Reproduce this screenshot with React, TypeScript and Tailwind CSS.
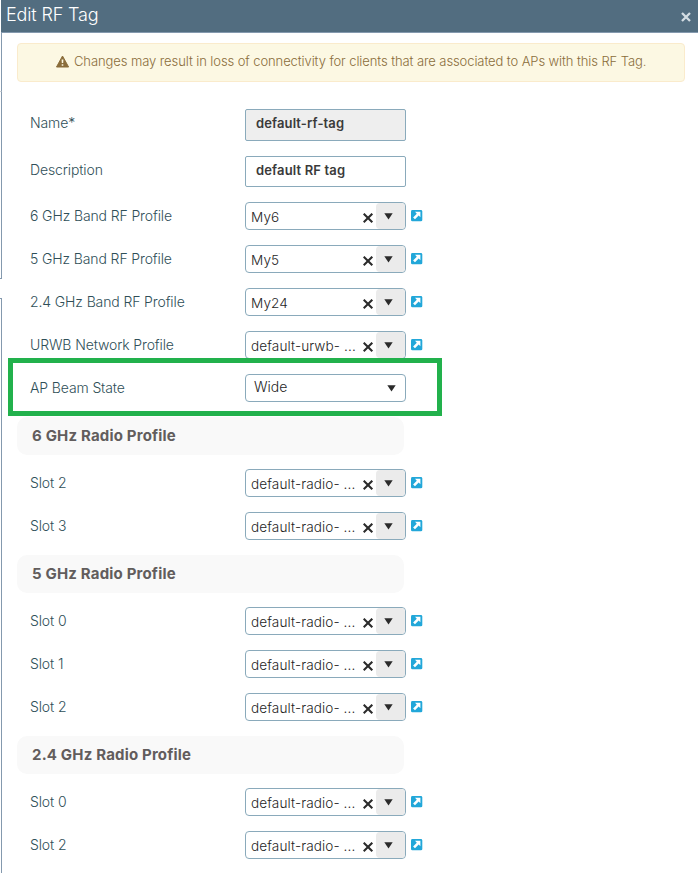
const font = "font-['Inter','Liberation_Sans',sans-serif]";

function WarningIcon() {
    return (
        <svg width="14" height="13" viewBox="0 0 14 13" className="-mt-[3px] mr-[4px] shrink-0">
            <path
                d="M6.5 1 L12.6 12 H0.5 Z"
                fill="#8a6d3b"
                stroke="#8a6d3b"
                strokeWidth="1"
                strokeLinejoin="round"
            />
            <path d="M5.6 4.4 H7.4 L7.2 8 H5.8 Z M5.7 9.2 H7.3 V10.8 H5.7 Z" fill="#fcf8e3" />
        </svg>
    );
}

function LinkIcon() {
    return (
        <svg width="12" height="12" viewBox="0 0 12 12" className="ml-[5px] -mt-px shrink-0">
            <rect x="0" y="0" width="11.3" height="11.3" rx="1.4" fill="#22a7d9" />
            <path d="M4 1.8 H9.4 V7.2 L7.7 5.6 L4 9.3 L2.1 7.4 L5.8 3.7 Z" fill="#fff" />
        </svg>
    );
}

function Arrow() {
    return (
        <svg width="9" height="7" viewBox="0 0 9 7" className="block">
            <path d="M0.3 0.2 H8.7 L4.5 6.6 Z" fill="#2b2b2b" />
        </svg>
    );
}

function Label({ text }: { text: string }) {
    return (
        <div className="w-[215px] shrink-0 text-[14px] leading-5 font-light tracking-[-0.12px] text-[#2f4f58] whitespace-nowrap">
            {text}
        </div>
    );
}

function ProfileRow({ label, value }: { label: string; value: string }) {
    return (
        <div className="flex h-7 items-center mb-[15px] pl-[28px]">
            <Label text={label} />
            <div className="flex h-7 w-[161px] items-center rounded-[4px] border border-[#8aaabb] bg-white">
                <span className="flex-1 pl-[5px] pt-[2px] text-[13.6px] leading-5 font-light tracking-[0.1px] text-[#1f1f1f] whitespace-nowrap">
                    {value}
                </span>
                <svg width="11" height="10" viewBox="0 0 11 10" className="mr-[2px] mt-[4px] shrink-0">
                    <path d="M0.7 0.7 L9.3 9.2 M9.3 0.7 L0.7 9.2" stroke="#2b2b2b" strokeWidth="2.1" />
                </svg>
                <div className="flex h-full w-[29px] shrink-0 justify-center rounded-[4px] bg-[#ebebeb] pt-[10px] pr-[4px]">
                    <Arrow />
                </div>
            </div>
            <LinkIcon />
        </div>
    );
}

function Section({ title }: { title: string }) {
    return (
        <div className="mb-[14px] ml-[15px] flex h-[38px] w-[387px] items-center rounded-[10px] bg-[#f9f9f9] pl-[15px] text-[15px] font-bold tracking-[0.18px] text-[#625d5d]">
            {title}
        </div>
    );
}

export default function App() {
    return (
        <div className={`relative flex h-[873px] w-[698px] flex-col overflow-hidden bg-white ${font}`}>
            <div className="ml-px flex h-[33px] shrink-0 items-center justify-between border-b border-[#8499ae] bg-[#526d80] pl-[5px] pr-[7px]">
                <span className="-mt-[3px] text-[18px] font-light tracking-[-0.15px] text-white">Edit RF Tag</span>
                <svg width="10" height="10" viewBox="0 0 10 10" className="mt-[2px]">
                    <path d="M1 1 L9 9 M9 1 L1 9" stroke="#d4dde3" strokeWidth="2.3" />
                </svg>
            </div>
            <div className="flex flex-1">
                <div className="flex w-[2px] shrink-0 flex-col">
                    <div className="h-[59px] border-r border-b border-r-[#8499ae] border-b-[#c9ced3]"></div>
                    <div className="h-[187px] border-r border-b border-[#8499ae]"></div>
                    <div className="mt-[19px] flex-1 border-t border-r border-[#8499ae]"></div>
                </div>
                <div className="flex-1 pt-[10px]">
                    <div className="ml-[15px] flex h-[39px] w-[668px] items-center rounded-[4px] border border-[#faebcc] bg-[#fcf8e3] pl-[38px] text-[13px] font-light tracking-[-0.09px] text-[#8a6d3b] whitespace-nowrap">
                        <WarningIcon />
                        <span className="-mt-px">
                            Changes may result in loss of connectivity for clients that are associated to APs with this RF Tag.
                        </span>
                    </div>
                    <div className="mt-[27px] flex h-8 pl-[28px]">
                        <div className="pt-[4px]">
                            <Label text="Name*" />
                        </div>
                        <div className="flex h-8 w-[161px] items-center rounded-[2px] border border-[#8aaabb] bg-[#eeeeee] pb-[3px] pl-[10px] text-[13px] font-semibold tracking-[0.12px] text-[#3a3a3a]">
                            default-rf-tag
                        </div>
                    </div>
                    <div className="mt-[15px] mb-[15px] flex h-[31px] pl-[28px]">
                        <div className="pt-[4px]">
                            <Label text="Description" />
                        </div>
                        <div className="flex h-[31px] w-[161px] items-center rounded-[2px] border border-[#8aaabb] bg-white pb-[2px] pl-[10px] text-[13px] font-semibold tracking-[0.15px] text-[#3a3a3a]">
                            default RF tag
                        </div>
                    </div>
                    <ProfileRow label="6 GHz Band RF Profile" value="My6" />
                    <ProfileRow label="5 GHz Band RF Profile" value="My5" />
                    <ProfileRow label="2.4 GHz Band RF Profile" value="My24" />
                    <ProfileRow label="URWB Network Profile" value="default-urwb- ..." />
                    <div className="relative mb-[15px] flex h-7 items-center pl-[28px]">
                        <div className="absolute -top-4 left-[6px] h-[58px] w-[434px] border-[5px] border-[#22b14c]"></div>
                        <Label text="AP Beam State" />
                        <div className="flex h-7 w-[161px] items-center justify-between rounded-[4px] border border-[#8aaabb] bg-white pl-[8px] pr-[9px]">
                            <span className="-mt-[2px] text-[14px] leading-5 font-light text-[#1f1f1f]">Wide</span>
                            <Arrow />
                        </div>
                    </div>
                    <Section title="6 GHz Radio Profile" />
                    <ProfileRow label="Slot 2" value="default-radio- ..." />
                    <ProfileRow label="Slot 3" value="default-radio- ..." />
                    <Section title="5 GHz Radio Profile" />
                    <ProfileRow label="Slot 0" value="default-radio- ..." />
                    <ProfileRow label="Slot 1" value="default-radio- ..." />
                    <ProfileRow label="Slot 2" value="default-radio- ..." />
                    <Section title="2.4 GHz Radio Profile" />
                    <ProfileRow label="Slot 0" value="default-radio- ..." />
                    <ProfileRow label="Slot 2" value="default-radio- ..." />
                </div>
            </div>
        </div>
    );
}
